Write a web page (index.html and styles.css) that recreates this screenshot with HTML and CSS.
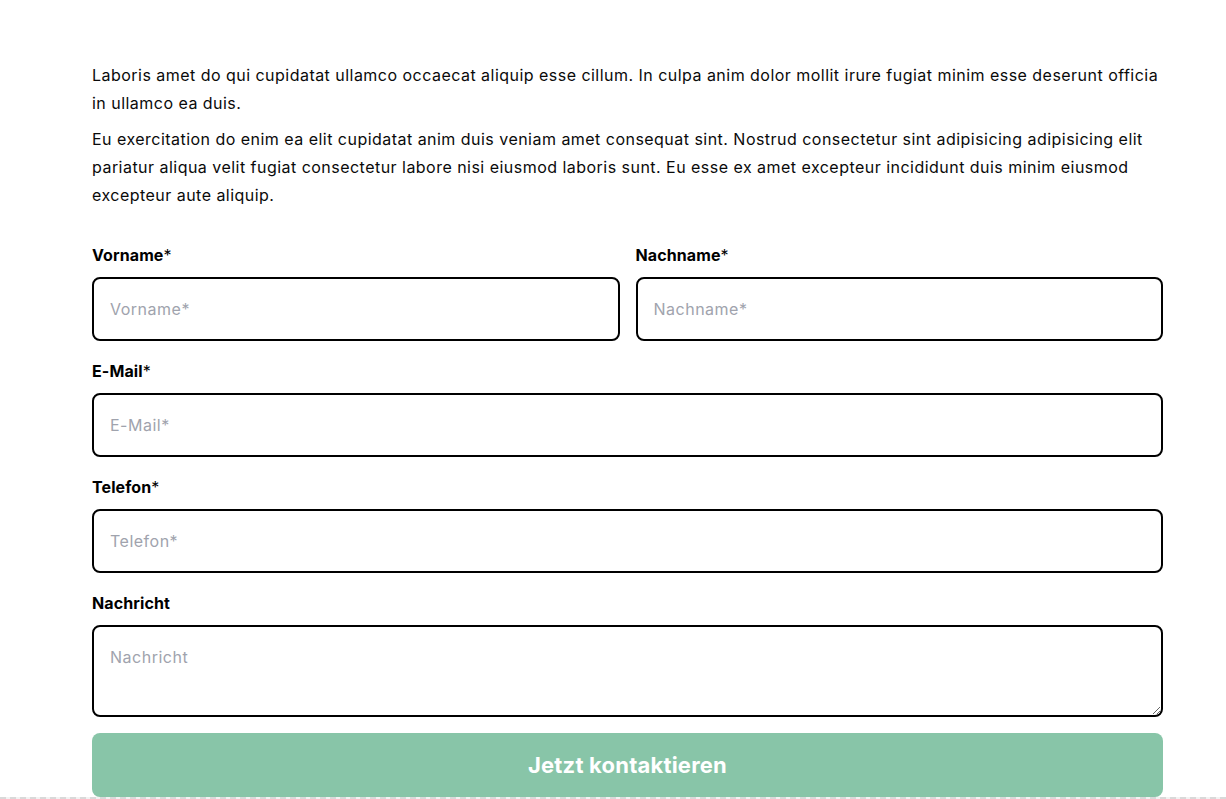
FILE: index.html
```html
<!DOCTYPE html>
<html lang="de">
<head>
<meta charset="utf-8">
<title>Kontakt</title>
<link rel="stylesheet" href="styles.css">
</head>
<body>
<main class="page">
  <div class="intro">
    <p>Laboris amet do qui cupidatat ullamco occaecat aliquip esse cillum. In culpa anim dolor mollit irure fugiat minim esse deserunt officia in ullamco ea duis.</p>
    <p>Eu exercitation do enim ea elit cupidatat anim duis veniam amet consequat sint. Nostrud consectetur sint adipisicing adipisicing elit pariatur aliqua velit fugiat consectetur labore nisi eiusmod laboris sunt. Eu esse ex amet excepteur incididunt duis minim eiusmod excepteur aute aliquip.</p>
  </div>
  <form class="form">
    <div class="row">
      <div class="field">
        <label class="label" for="vorname"><b>Vorname</b>*</label>
        <input class="input" id="vorname" type="text" placeholder="Vorname*">
      </div>
      <div class="field">
        <label class="label" for="nachname"><b>Nachname</b>*</label>
        <input class="input" id="nachname" type="text" placeholder="Nachname*">
      </div>
    </div>
    <div class="field">
      <label class="label" for="email"><b>E-Mail</b>*</label>
      <input class="input" id="email" type="email" placeholder="E-Mail*">
    </div>
    <div class="field">
      <label class="label" for="telefon"><b>Telefon</b>*</label>
      <input class="input" id="telefon" type="tel" placeholder="Telefon*">
    </div>
    <div class="field">
      <label class="label" for="nachricht"><b>Nachricht</b></label>
      <textarea class="input textarea" id="nachricht" placeholder="Nachricht"></textarea>
    </div>
    <button class="submit" type="button">Jetzt kontaktieren</button>
  </form>
</main>
<div class="edge"></div>
</body>
</html>
```
FILE: styles.css
```css
* { box-sizing: border-box; }
html, body { margin: 0; padding: 0; background: #fff; }
body {
  font-family: Inter, "Noto Sans", sans-serif;
  color: #000;
  font-size: 16px;
  line-height: 28px;
  height: 799px;
  overflow: hidden;
  position: relative;
}
.page {
  width: 1071px;
  margin-left: 92px;
  padding-top: 61px;
}
.intro p { margin: 0 0 8px; letter-spacing: 0.47px; color: #0a0a0a; }
.form {
  margin-top: 34px;
  display: flex;
  flex-direction: column;
  gap: 18px;
}
.row {
  display: grid;
  grid-template-columns: 1fr 1fr;
  gap: 16px;
}
.field { display: flex; flex-direction: column; gap: 10px; }
.label { font-size: 16px; line-height: 24px; font-weight: 400; letter-spacing: 0.1px; }
.label b { font-weight: 700; }
.input {
  height: 64px;
  border: 2px solid #000;
  border-radius: 8px;
  padding: 0 16px;
  font: inherit;
  font-size: 16px;
  letter-spacing: 0.5px;
  color: #000;
  background: #fff;
  outline: none;
}
.input::placeholder { color: #a0a3ad; }
.textarea {
  height: 92px;
  padding: 16px;
  line-height: 28px;
  resize: vertical;
  display: block;
}
.submit {
  margin-top: -2px;
  height: 64px;
  border: 0;
  border-radius: 8px;
  background: #88c5a8;
  color: #fff;
  font: inherit;
  font-size: 22px;
  font-weight: 700;
  letter-spacing: 0.2px;
}
.edge {
  position: absolute;
  left: 0; right: 0; bottom: 0;
  height: 2px;
  background: repeating-linear-gradient(90deg, #d9d9d9 0 6px, #f2f2f2 6px 10px);
}
```
